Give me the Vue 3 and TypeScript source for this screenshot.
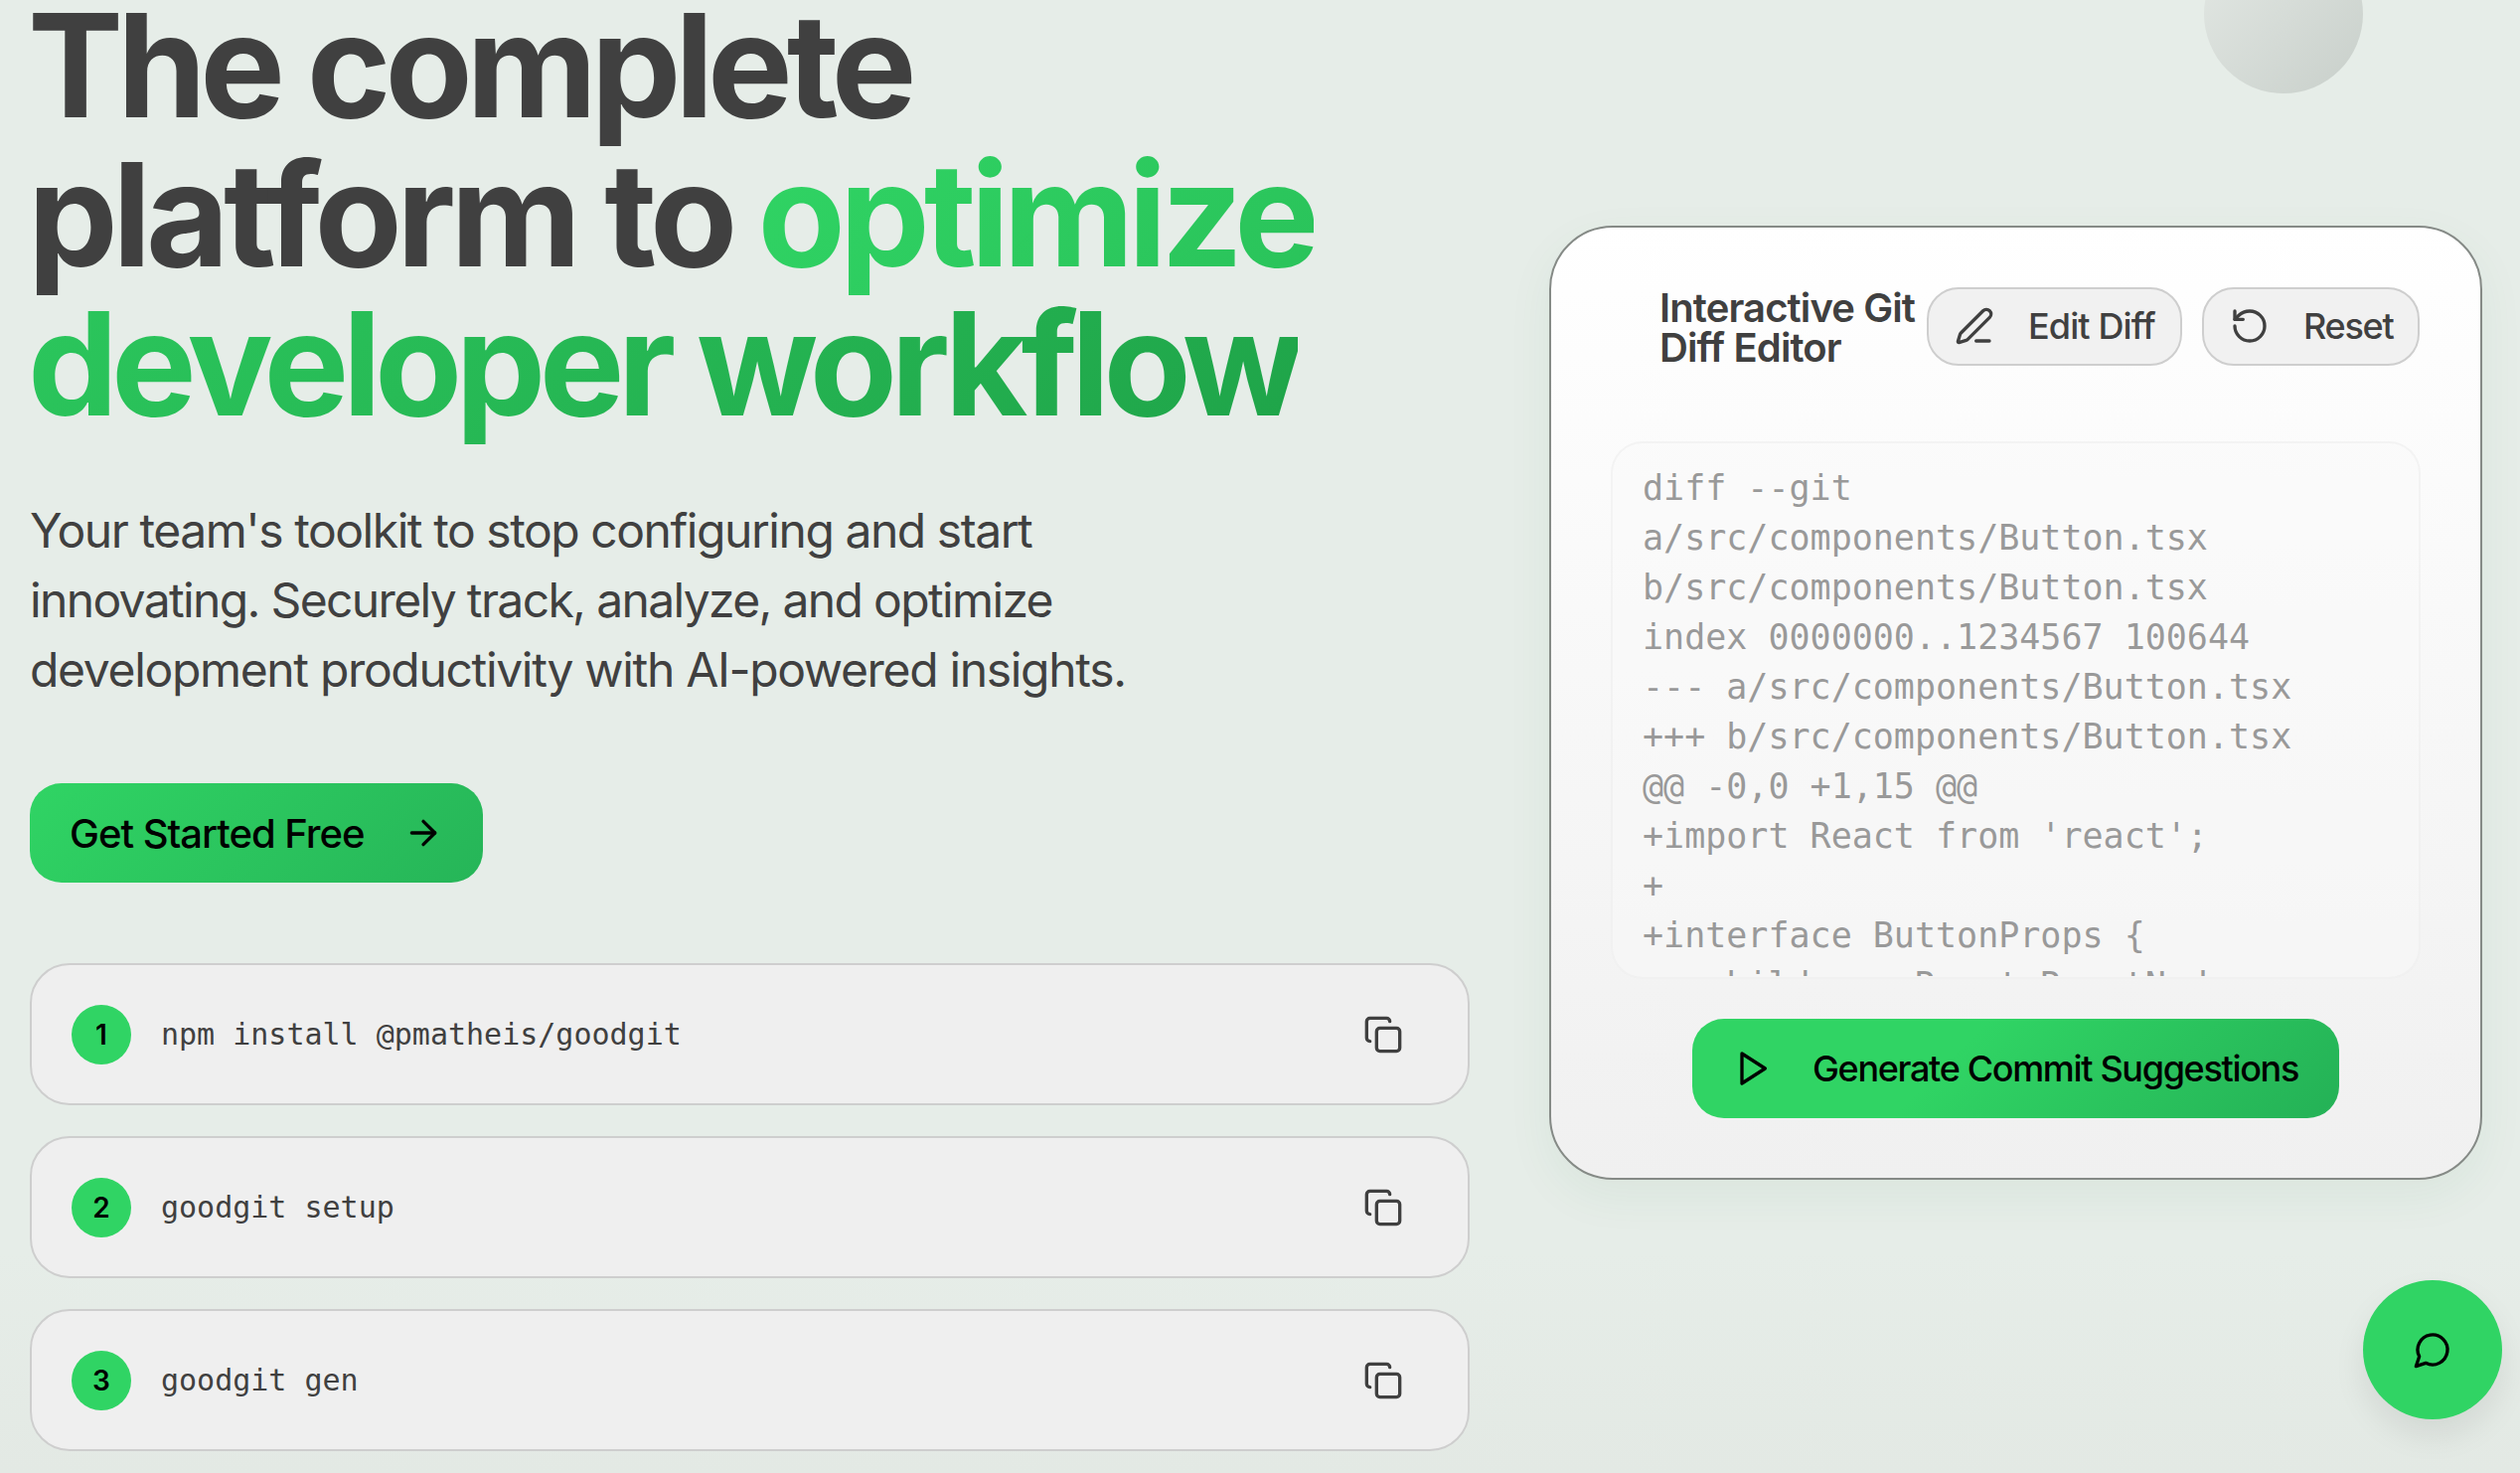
<script setup lang="ts">
const steps: { n: number; cmd: string }[] = [
  { n: 1, cmd: 'npm install @pmatheis/goodgit' },
  { n: 2, cmd: 'goodgit setup' },
  { n: 3, cmd: 'goodgit gen' },
]
const diff = `diff --git
a/src/components/Button.tsx
b/src/components/Button.tsx
index 0000000..1234567 100644
--- a/src/components/Button.tsx
+++ b/src/components/Button.tsx
@@ -0,0 +1,15 @@
+import React from 'react';
+
+interface ButtonProps {
+  children: React.ReactNode;`
</script>

<template>
  <div class="page">
    <div class="orb"></div>
    <section class="left">
      <h1 class="headline">The complete<br /><span class="line-lead">platform to </span><span class="grad"><span class="line-two">optimize</span><br /><span class="line-three">developer workflow</span></span></h1>
      <p class="lead"><span class="lead-one">Your team's toolkit to stop configuring and start</span><br /><span class="lead-two">innovating. Securely track, analyze, and optimize</span><br /><span class="lead-three">development productivity with AI-powered insights.</span></p>
      <button class="cta">
        <span>Get Started Free</span>
        <svg class="ic" viewBox="0 0 24 24"><path d="M5 12h14" /><path d="m12 5 7 7-7 7" /></svg>
      </button>
      <div class="steps">
        <div v-for="s in steps" :key="s.n" class="step">
          <span class="num">{{ s.n }}</span>
          <code class="cmd">{{ s.cmd }}</code>
          <svg class="ic copy" viewBox="0 0 24 24"><rect x="8" y="8" width="14" height="14" rx="2" ry="2" /><path d="M4 16c-1.1 0-2-.9-2-2V4c0-1.1.9-2 2-2h10c1.1 0 2 .9 2 2" /></svg>
        </div>
      </div>
    </section>
    <section class="right">
      <div class="card">
        <div class="card-head">
          <h2 class="title">Interactive Git<br />Diff Editor</h2>
          <button class="ghost edit">
            <svg class="ic" viewBox="0 0 24 24"><path d="M13 21h8" /><path d="M21.174 6.812a1 1 0 0 0-3.986-3.987L3.842 16.174a2 2 0 0 0-.5.83l-1.321 4.352a.5.5 0 0 0 .623.622l4.353-1.32a2 2 0 0 0 .83-.497z" /></svg>
            <span>Edit Diff</span>
          </button>
          <button class="ghost reset">
            <svg class="ic" viewBox="0 0 24 24"><path d="M3 12a9 9 0 1 0 9-9 9.75 9.75 0 0 0-6.74 2.74L3 8" /><path d="M3 3v5h5" /></svg>
            <span>Reset</span>
          </button>
        </div>
        <div class="diff">
          <pre class="diff-text">{{ diff }}</pre>
        </div>
        <button class="generate">
          <svg class="ic" viewBox="0 0 24 24"><polygon points="6 3 20 12 6 21 6 3" /></svg>
          <span>Generate Commit Suggestions</span>
        </button>
      </div>
    </section>
    <button class="fab">
      <svg class="ic" viewBox="0 0 24 24"><path d="M7.9 20A9 9 0 1 0 4 16.1L2 22Z" /></svg>
    </button>
  </div>
</template>

<style scoped>
.page {
  position: relative;
  display: flex;
  width: 2536px;
  height: 1482px;
  overflow: hidden;
  box-sizing: border-box;
  padding-left: 30px;
  background: linear-gradient(180deg, #e6ede8 0%, #e6ede8 85%, #e3e9e4 100%);
  font-family: Inter, "Liberation Sans", sans-serif;
  color: #404040;
}
.orb {
  position: absolute;
  left: 2218px;
  top: -66px;
  width: 160px;
  height: 160px;
  border-radius: 50%;
  background: linear-gradient(135deg, #e4e9e5, #c8cfca);
}
.left {
  width: 1449px;
  flex: none;
}
.headline {
  margin: -9px 0 0 -2px;
  font-size: 144px;
  line-height: 150px;
  font-weight: 700;
  letter-spacing: -6.2px;
  white-space: nowrap;
}
.line-lead {
  margin-right: -3px;
  letter-spacing: -5.45px;
}
.line-two {
  letter-spacing: -5.9px;
}
.line-three {
  letter-spacing: -6.7px;
}
.grad {
  background: linear-gradient(135deg, #30d464 0%, #1fa449 100%);
  -webkit-background-clip: text;
  background-clip: text;
  color: transparent;
}
.lead {
  margin: 58px 0 0;
  font-size: 48px;
  line-height: 70px;
  white-space: nowrap;
}
.lead-one {
  letter-spacing: -1.45px;
}
.lead-two {
  letter-spacing: -1.65px;
}
.lead-three {
  letter-spacing: -1.33px;
}
.cta {
  display: flex;
  align-items: center;
  gap: 39px;
  height: 100px;
  width: 456px;
  margin-top: 79px;
  padding: 0 0 0 40px;
  border: 0;
  border-radius: 32px;
  background: linear-gradient(135deg, #30d464, #26b558);
  color: #000;
  font: 500 40px Inter, sans-serif;
  letter-spacing: -0.025em;
}
.ic {
  width: 40px;
  height: 40px;
  flex: none;
  fill: none;
  stroke: currentColor;
  stroke-width: 2;
  stroke-linecap: round;
  stroke-linejoin: round;
}
.steps {
  display: flex;
  flex-direction: column;
  gap: 31px;
  margin-top: 81px;
}
.step {
  display: flex;
  align-items: center;
  box-sizing: border-box;
  height: 143px;
  padding: 0 65px 0 40px;
  border: 2px solid #cecece;
  border-radius: 40px;
  background: #efefef;
}
.num {
  display: flex;
  align-items: center;
  justify-content: center;
  width: 60px;
  height: 60px;
  flex: none;
  border-radius: 50%;
  background: #30d464;
  color: #000;
  font-size: 28px;
  font-weight: 600;
}
.cmd {
  flex: 1;
  margin-left: 30px;
  font-family: "DejaVu Sans Mono", monospace;
  font-size: 30px;
  color: #404040;
}
.copy {
  color: #404040;
}
.right {
  width: 939px;
  flex: none;
  margin-left: 80px;
  padding-top: 227px;
}
.card {
  box-sizing: border-box;
  height: 960px;
  padding: 57px 60px 0;
  border: 2px solid #858a86;
  border-radius: 64px;
  background: linear-gradient(180deg, #ffffff, #f0f0f0);
  box-shadow: 0 16px 48px rgba(40, 120, 70, 0.06);
}
.card-head {
  display: flex;
  align-items: center;
  padding-left: 49px;
}
.title {
  flex: none;
  width: 269px;
  margin: 4px 0 0;
  font-size: 40px;
  line-height: 40px;
  font-weight: 600;
  letter-spacing: -0.022em;
  white-space: nowrap;
}
.ghost {
  display: flex;
  align-items: center;
  box-sizing: border-box;
  height: 79px;
  padding: 0 26px;
  border: 2px solid #cecece;
  border-radius: 32px;
  background: #f1f1f1;
  color: #404040;
  font: 500 36px Inter, sans-serif;
  white-space: nowrap;
}
.edit {
  width: 257px;
  gap: 34px;
  letter-spacing: -0.025em;
}
.reset {
  width: 219px;
  gap: 34px;
  margin-left: 20px;
  letter-spacing: -0.035em;
}
.diff {
  box-sizing: border-box;
  height: 541px;
  margin: 74px 0 0;
  padding: 20px 30px 0;
  border: 2px solid rgba(235, 235, 235, 0.5);
  border-radius: 32px;
  background: rgba(250, 250, 250, 0.4);
}
.diff-text {
  height: 516px;
  margin: 0;
  overflow: hidden;
  font-family: "DejaVu Sans Mono", monospace;
  font-size: 35px;
  line-height: 50px;
  color: #999;
}
.generate {
  display: flex;
  align-items: center;
  gap: 41px;
  box-sizing: border-box;
  width: 651px;
  height: 100px;
  margin: 40px auto 0;
  padding: 0 0 0 40px;
  border: 0;
  border-radius: 32px;
  background: linear-gradient(135deg, #30d464 40%, #24b156);
  color: #000;
  font: 500 36px Inter, sans-serif;
  letter-spacing: -0.037em;
  white-space: nowrap;
}
.fab {
  position: absolute;
  left: 2378px;
  top: 1288px;
  display: flex;
  align-items: center;
  justify-content: center;
  width: 140px;
  height: 140px;
  padding: 0;
  border: 0;
  border-radius: 50%;
  background: #30d464;
  color: #000;
  box-shadow: 0 16px 32px rgba(0, 0, 0, 0.08);
}
</style>
